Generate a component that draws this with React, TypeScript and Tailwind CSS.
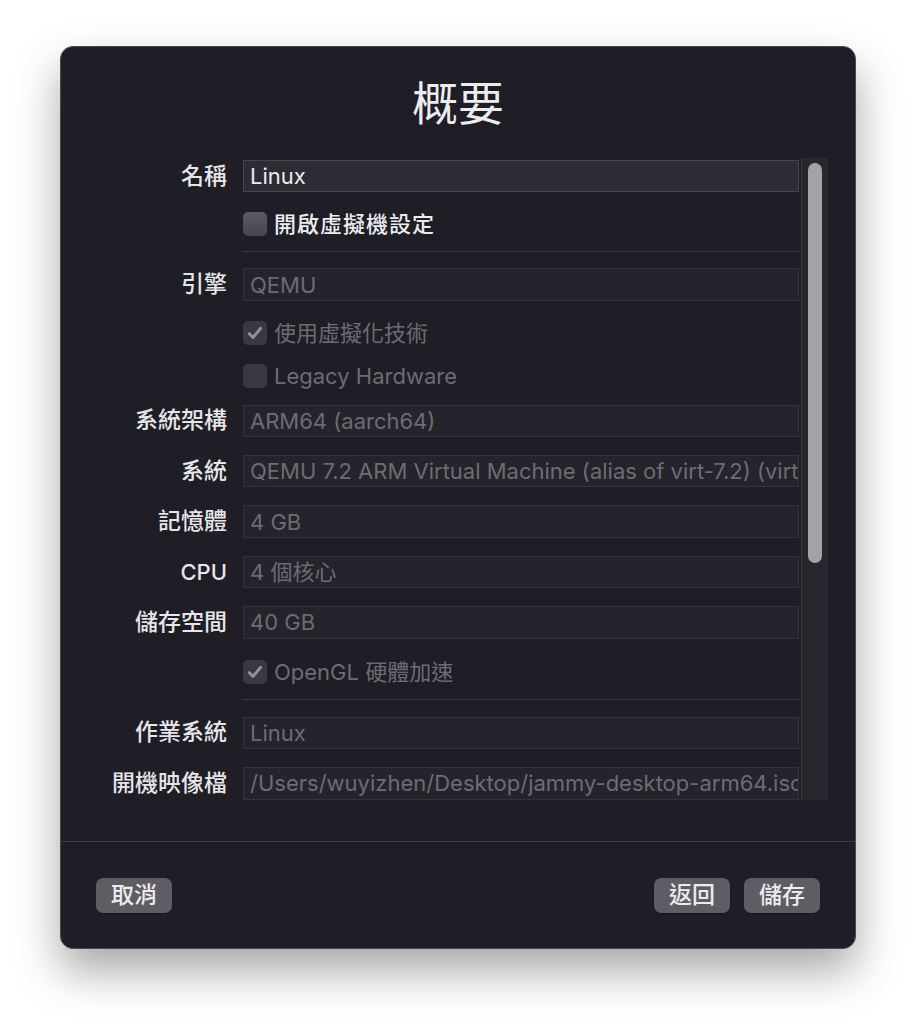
import React from 'react';

const font = { fontFamily: '"Inter", "Noto Sans CJK TC", sans-serif' };

const Field = ({ label, value, enabled = false, className = '' }: { label: string; value: string; enabled?: boolean; className?: string }) => (
  <div className={`flex items-center h-[33px] ${className}`}>
    <div className={`w-[166px] shrink-0 text-right font-medium text-[#e6e5e8] leading-none ${label === 'CPU' ? 'text-[22px]' : 'text-[23px]'}`}>
      {label}
    </div>
    <div
      className={`ml-[16px] flex-1 h-full flex items-center pl-[6px] overflow-hidden whitespace-nowrap text-[22px] leading-none border ${
        enabled ? 'bg-[#2d2b33] border-[#48464e] text-[#ececee]' : 'bg-[#25232b] border-[#35333a] text-[#6e6c73]'
      }`}
    >
      {value}
    </div>
  </div>
);

const Check = ({ label, checked = false, enabled = false, className = '' }: { label: string; checked?: boolean; enabled?: boolean; className?: string }) => (
  <div className={`flex items-center h-[24px] pl-[182px] ${className}`}>
    <div
      className={`w-[24px] h-[24px] rounded-[5px] flex items-center justify-center ${
        enabled ? 'bg-gradient-to-b from-[#5c5a61] to-[#47454c]' : 'bg-[#3b3940]'
      }`}
    >
      {checked && (
        <svg width="18" height="18" viewBox="0 0 16 16" fill="none">
          <path d="M3 8.6l3.2 3.4L13 3.8" stroke="#939197" strokeWidth="2.6" strokeLinecap="round" strokeLinejoin="round" />
        </svg>
      )}
    </div>
    <span className={`ml-[7px] text-[22px] leading-none ${enabled ? 'text-[#ececee] font-medium tracking-[1px]' : 'text-[#6e6c73]'}`}>{label}</span>
  </div>
);

const Sep = ({ className = '' }: { className?: string }) => (
  <div className={`ml-[182px] mr-[-2px] h-px bg-[#3a3840] ${className}`} />
);

const Button = ({ children }: { children: React.ReactNode }) => (
  <button className="w-[76px] h-[35px] rounded-[7px] bg-[#5f5d64] text-[23px] font-medium text-[#ececee] leading-none shadow-[0_1px_1px_rgba(0,0,0,0.3)]">
    {children}
  </button>
);

export default function App() {
  return (
    <div className="w-[916px] h-[1024px] bg-white pt-[46px] pl-[60px]" style={font}>
      <div className="w-[796px] h-[903px] rounded-[13px] bg-[#1f1d25] border border-[#4a494f] shadow-[0_22px_45px_rgba(0,0,0,0.35)] flex flex-col overflow-hidden">
        {/* Title */}
        <div className="pt-[33px] h-[111px] text-center text-[46px] leading-none text-[#ececee]">概要</div>

        {/* Scroll area */}
        <div className="flex h-[642px] mr-[27px]">
          <div className="flex-1 pr-[2px] overflow-hidden flex flex-col">
            <Field label="名稱" value="Linux" enabled className="mt-[2px]" />
            <Check label="開啟虛擬機設定" enabled className="mt-[20px]" />
            <Sep className="mt-[15px]" />
            <Field label="引擎" value="QEMU" className="mt-[16px]" />
            <Check label="使用虛擬化技術" checked className="mt-[20px]" />
            <Check label="Legacy Hardware" className="mt-[19px]" />
            <Field label="系統架構" value="ARM64 (aarch64)" className="mt-[17px]" />
            <Field label="系統" value="QEMU 7.2 ARM Virtual Machine (alias of virt-7.2) (virt)" className="mt-[18px]" />
            <Field label="記憶體" value="4 GB" className="mt-[18px]" />
            <Field label="CPU" value="4 個核心" className="mt-[18px]" />
            <Field label="儲存空間" value="40 GB" className="mt-[18px]" />
            <Check label="OpenGL 硬體加速" checked className="mt-[21px]" />
            <Sep className="mt-[15px]" />
            <Field label="作業系統" value="Linux" className="mt-[17px]" />
            <Field label="開機映像檔" value="/Users/wuyizhen/Desktop/jammy-desktop-arm64.iso" className="mt-[18px] shrink-0" />
          </div>
          {/* Scrollbar */}
          <div className="w-[27px] bg-[#29272e] border-l border-[#3c3a41] pt-[5px] flex justify-center">
            <div className="w-[14px] h-[400px] rounded-full bg-[#a3a2a6]" />
          </div>
        </div>

        {/* Footer */}
        <div className="mt-[41px] h-px bg-[#3d3b42]" />
        <div className="flex items-center justify-between pt-[36px] px-[35px]">
          <Button>取消</Button>
          <div className="flex gap-[14px]">
            <Button>返回</Button>
            <Button>儲存</Button>
          </div>
        </div>
      </div>
    </div>
  );
}
